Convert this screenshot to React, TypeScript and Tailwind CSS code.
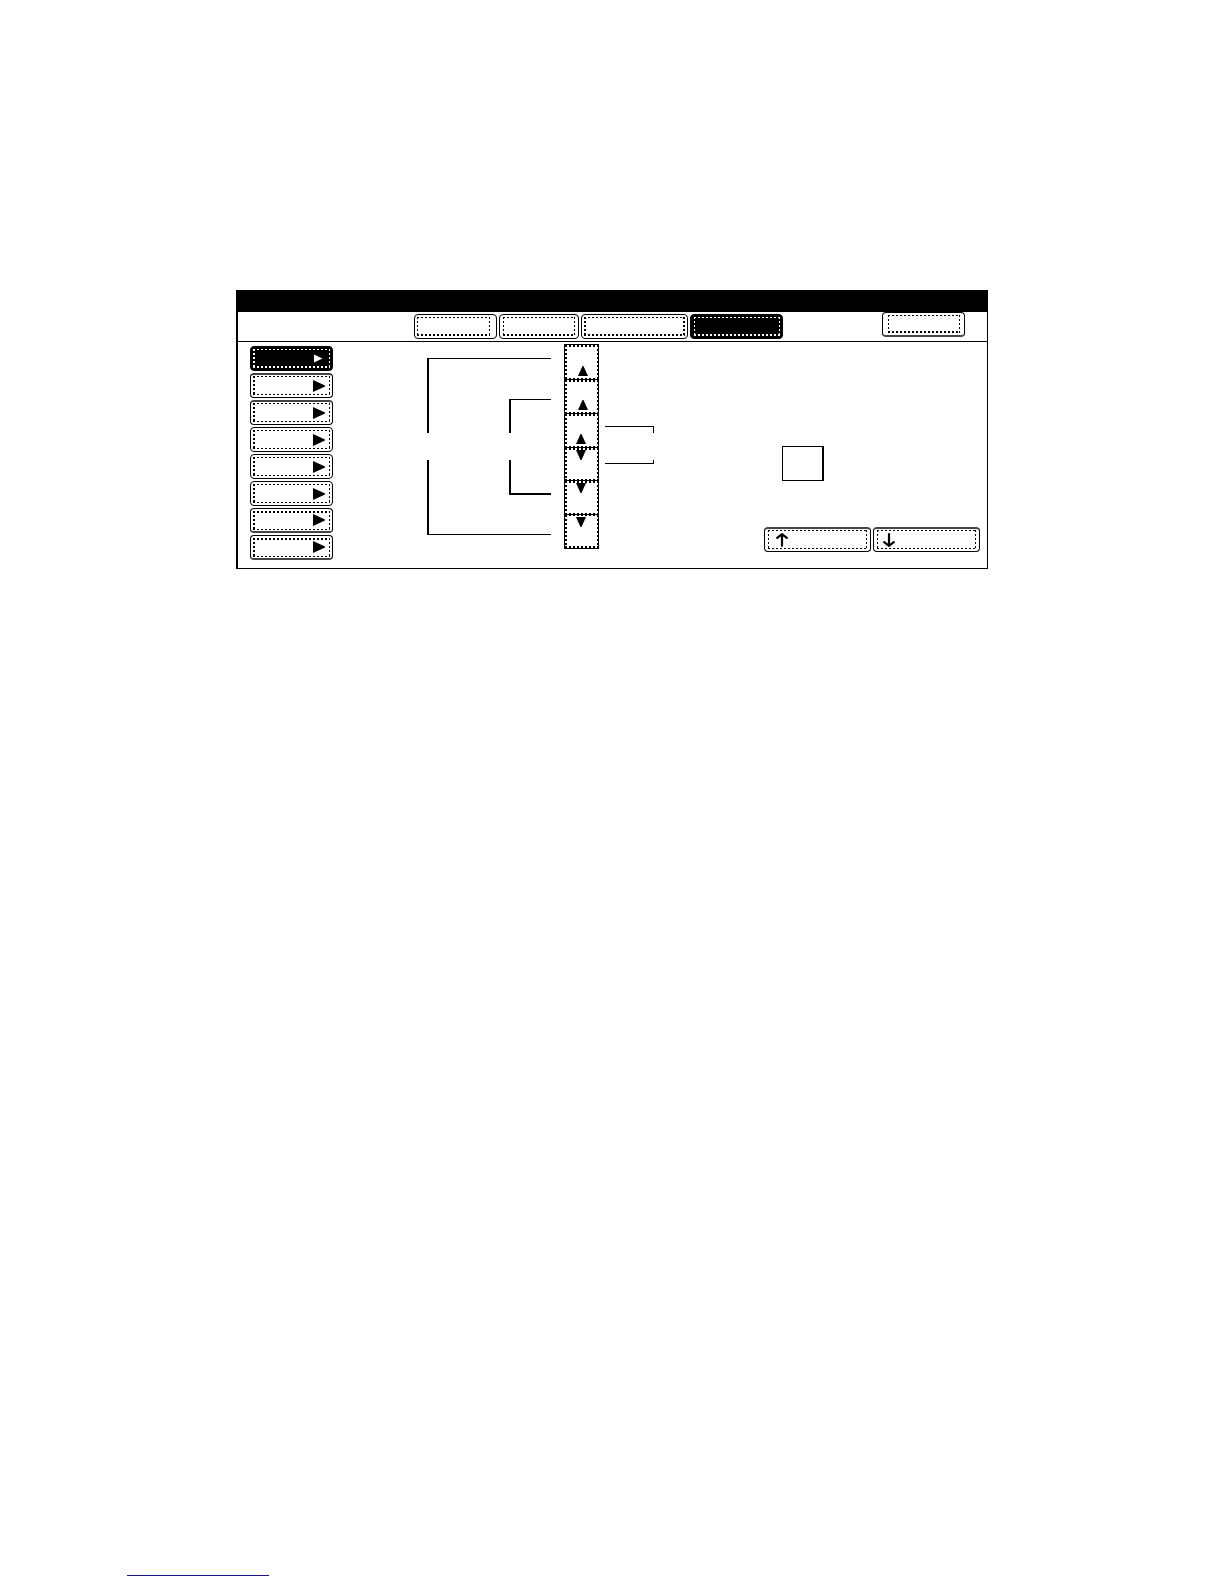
import clsx from "clsx"

const DOTS =
  "bg-no-repeat bg-[repeating-linear-gradient(90deg,currentColor_0_2px,transparent_2px_4px),repeating-linear-gradient(90deg,currentColor_0_2px,transparent_2px_4px),repeating-linear-gradient(180deg,currentColor_0_2px,transparent_2px_4px),repeating-linear-gradient(180deg,currentColor_0_2px,transparent_2px_4px)] [background-position:top,bottom,left,right]"

// dot thickness, in the order top, bottom, left, right
const THIN = "[background-size:100%_1px,100%_1px,1px_100%,1px_100%]"
const LEFT = "[background-size:100%_1px,100%_1px,2px_100%,1px_100%]"
const LEFT_BOTTOM = "[background-size:100%_1px,100%_2px,2px_100%,1px_100%]"
const LEFT_TOP = "[background-size:100%_2px,100%_1px,2px_100%,1px_100%]"
const BOTTOM = "[background-size:100%_1px,100%_2px,1px_100%,1px_100%]"
const SIDES_BOTTOM = "[background-size:100%_1px,100%_2px,2px_100%,2px_100%]"

const GREY_TOP = "border-t-2 border-t-[#444444]"
const GREY_BOTTOM = "border-b-2 border-b-[#444444]"

const tabs = [
  { label: "Tab 1", width: "w-[83px]", inset: "inset-y-[2px] left-[2px] right-[6px]", dots: BOTTOM },
  { label: "Tab 2", width: "w-[80px]", inset: "inset-y-[2px] left-[3px] right-[3px]", dots: BOTTOM },
  { label: "Tab 3", width: "w-[107px]", inset: "inset-y-[2px] left-[2px] right-[2px]", dots: SIDES_BOTTOM },
  { label: "Tab 4", width: "w-[93px]", inset: "inset-y-[2px] left-[3px] right-[2px]", dots: BOTTOM, active: true },
]

const menu = [
  { dots: LEFT_BOTTOM, border: "", active: true },
  { dots: LEFT, border: GREY_TOP },
  { dots: LEFT, border: GREY_TOP },
  { dots: LEFT, border: "" },
  { dots: LEFT, border: "" },
  { dots: LEFT, border: "" },
  { dots: LEFT_TOP, border: GREY_BOTTOM },
  { dots: LEFT_TOP, border: GREY_BOTTOM },
]

const steps = [
  { label: "Raise outer", up: true, shift: "pl-[2px]" },
  { label: "Raise middle", up: true, shift: "pl-[2px]" },
  { label: "Raise inner", up: true, shift: "" },
  { label: "Lower inner", up: false, shift: "" },
  { label: "Lower middle", up: false, shift: "" },
  { label: "Lower outer", up: false, shift: "" },
]

function Key({ label, width, inset, dots, border, active, children }: any) {
  return (
    <button
      type="button"
      aria-label={label}
      className={clsx(
        "relative flex h-[25px] shrink-0 items-center rounded-[4px] border border-black",
        active ? "bg-black text-white" : "bg-white text-black",
        width,
        border,
      )}
    >
      <span className={clsx("absolute", DOTS, dots, inset)} />
      {children}
    </button>
  )
}

function Arrow({ down }: { down?: boolean }) {
  return (
    <svg
      viewBox="0 0 12 14"
      className={clsx("h-[14px] w-[12px]", down ? "ml-[9px]" : "ml-[11px]")}
      fill="none"
      stroke="currentColor"
      strokeWidth="2.2"
      strokeLinecap="round"
      strokeLinejoin="round"
    >
      {down ? <path d="M6 1.2V12.5M1.2 9.2L6 12.8L10.8 9.2" /> : <path d="M6 12.8V1.5M1.2 4.8L6 1.2L10.8 4.8" />}
    </svg>
  )
}

export default function App() {
  return (
    <div className="bg-white px-[236px] pt-[290px] font-['Liberation_Sans',sans-serif] text-black">
      <main className="border border-l-2 border-black">
        <div className="h-[21px] bg-black" />

        <header className="flex h-[30px] items-start border-b border-black">
          <nav className="ml-44 mt-[2px] flex gap-[2px]">
            {tabs.map((tab) => (
              <Key key={tab.label} {...tab} />
            ))}
          </nav>
          <div className="ml-auto mr-[22px]">
            <Key label="Close" width="w-[83px]" inset="inset-y-[2px] left-[5px] right-[4px]" dots={BOTTOM} border={GREY_BOTTOM} />
          </div>
        </header>

        <div className="flex">
          <nav className="flex flex-col gap-[2px] pb-2 pl-3 pt-1">
            {menu.map((item, index) => (
              <Key
                key={index}
                label={`Menu ${index + 1}`}
                width="w-[83px]"
                inset={clsx("left-[2px] right-[2px]", item.border === GREY_TOP ? "top-[1px] bottom-[2px]" : item.border ? "top-[2px] bottom-[1px]" : "inset-y-[2px]")}
                dots={item.dots}
                border={item.border}
                active={item.active}
              >
                {item.active ? (
                  <svg viewBox="0 0 9 9" className="ml-auto mr-[9px] h-[9px] w-[9px] fill-white">
                    <path d="M0 0.5L8.5 4.5L0 8.5Z" />
                  </svg>
                ) : (
                  <svg viewBox="0 0 12 12" className="ml-auto mr-[7px] h-3 w-3 fill-black">
                    <path d="M0 0L12 5.5V6.5L0 12Z" />
                  </svg>
                )}
              </Key>
            ))}
          </nav>

          {/* brackets tying the outer and middle steps together */}
          <div className="ml-[94px] flex w-[124px] flex-col gap-[27px] pt-4">
            <div className="flex h-[75px] items-end justify-end border-l-2 border-t border-black">
              <div className="h-[34px] w-[42px] border-l-2 border-t border-black" />
            </div>
            <div className="flex h-[75px] items-start justify-end border-b border-l-2 border-black">
              <div className="h-[35px] w-[42px] border-b-2 border-l-2 border-black" />
            </div>
          </div>

          <div className="ml-[13px] mt-[2px] flex h-[205px] w-[35px] flex-col border border-black">
            {steps.map((step, index) => (
              <button
                key={step.label}
                type="button"
                aria-label={step.label}
                className={clsx(
                  "flex h-[34px] justify-center",
                  DOTS,
                  index === 5 ? LEFT_BOTTOM : LEFT_TOP,
                  index > 0 && "border-t border-black",
                  step.up ? "items-end pb-[3px]" : "items-start pt-[2px]",
                  step.shift || "pr-[1px]",
                )}
              >
                <svg viewBox="0 0 10 10" className="h-[10px] w-[10px] fill-black">
                  {step.up ? <path d="M4.5 0H5.5L10 10H0Z" /> : <path d="M0 0H10L5.5 10H4.5Z" />}
                </svg>
              </button>
            ))}
          </div>

          <div className="ml-[6px] flex w-[49px] flex-col gap-[27px] pt-[84px]">
            <div className="h-[7px] border-r border-t border-black" />
            <div className="h-[4px] border-b border-r border-black" />
          </div>

          <div className="flex flex-1 flex-col items-end pb-4 pr-[7px] pt-[104px]">
            <output aria-label="Value" className="mr-[156px] h-[35px] w-[42px] border border-r-2 border-black" />
            <div className="mt-auto flex gap-[2px]">
              <Key label="Previous" width="w-[107px]" inset="top-[1px] bottom-[2px] inset-x-[3px]" dots={THIN} border={GREY_TOP}>
                <Arrow />
              </Key>
              <Key label="Next" width="w-[107px]" inset="top-[1px] bottom-[2px] inset-x-[3px]" dots={THIN} border={GREY_TOP}>
                <Arrow down />
              </Key>
            </div>
          </div>
        </div>
      </main>

      <footer className="-ml-[109px] mt-[1006px] pb-2">
        <a href="#" aria-label="Footer link" className="block w-[142px] border-b border-[#15158c]" />
      </footer>
    </div>
  )
}
